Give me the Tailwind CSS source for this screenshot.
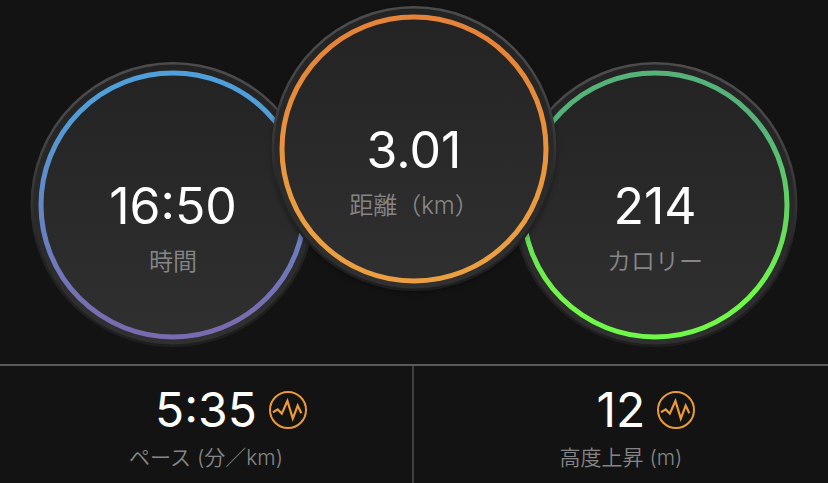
<!DOCTYPE html>
<html lang="ja">
<head>
    <meta charset="UTF-8">
    <meta name="viewport" content="width=device-width, initial-scale=1.0">
    <title>ランニング</title>
    <script src="https://cdn.jsdelivr.net/npm/@tailwindcss/browser@4"></script>
</head>
<body class="flex min-h-screen flex-col bg-[#131313] font-['Inter','Noto_Sans_CJK_JP',sans-serif] text-white">
    <!-- Shared gradients and icons -->
    <svg class="absolute size-0" aria-hidden="true">
        <defs>
            <linearGradient id="face" x1="0" y1="0" x2="0" y2="1">
                <stop offset="0" stop-color="#232323" />
                <stop offset="1" stop-color="#303030" />
            </linearGradient>
            <linearGradient id="rim" x1="0" y1="0" x2="0" y2="1">
                <stop offset="0" stop-color="#4c4c4c" />
                <stop offset="0.25" stop-color="#464646" />
                <stop offset="0.5" stop-color="#333333" />
                <stop offset="0.65" stop-color="#232323" />
                <stop offset="1" stop-color="#1e1e1e" />
            </linearGradient>
            <linearGradient id="blue" x1="0" y1="0" x2="0" y2="1">
                <stop offset="0.1" stop-color="#4fa0da" />
                <stop offset="0.95" stop-color="#7a6bb0" />
            </linearGradient>
            <linearGradient id="orange" x1="0" y1="0" x2="0" y2="1">
                <stop offset="0.1" stop-color="#e68338" />
                <stop offset="0.8" stop-color="#eb9f40" />
            </linearGradient>
            <linearGradient id="green" x1="0" y1="0" x2="0" y2="1">
                <stop offset="0.2" stop-color="#55b37a" />
                <stop offset="0.85" stop-color="#70f848" />
            </linearGradient>
        </defs>
        <symbol id="pulse" viewBox="0 0 38 38">
            <circle cx="19" cy="19" r="18" fill="none" stroke="#eb9b35" stroke-width="2" />
            <path d="M4 21.2 8.7 18.4 12.8 22.6 18.4 10 23.8 27.6 28.7 14.6 32.3 22.2" fill="none" stroke="#eb9b35" stroke-width="2.2" />
        </symbol>
    </svg>

    <main class="flex justify-center pt-1.5 pb-4">
        <section class="mt-14 grid w-[286px]">
            <svg class="col-start-1 row-start-1 w-full" viewBox="0 0 286 286" aria-hidden="true">
                <circle cx="143" cy="142.5" r="141.2" fill="url(#face)" stroke="url(#rim)" stroke-width="2.5" />
                <circle cx="143" cy="143" r="132" fill="none" stroke="url(#blue)" stroke-width="5" />
            </svg>
            <div class="z-10 col-start-1 row-start-1 pt-30 text-center">
                <p class="text-[50px] leading-12">16:50</p>
                <h2 class="mt-4 text-2xl leading-8 font-[350] text-[#868686]">時間</h2>
            </div>
        </section>

        <section class="z-10 -mx-[45px] grid w-[286px] self-start">
            <svg class="col-start-1 row-start-1 w-full overflow-visible drop-shadow-[0_2px_2px_rgb(0_0_0/0.3)]" viewBox="0 0 286 286" aria-hidden="true">
                <circle cx="143" cy="142.5" r="141.2" fill="url(#face)" stroke="url(#rim)" stroke-width="2.5" />
                <circle cx="143" cy="143" r="132" fill="none" stroke="url(#orange)" stroke-width="5" />
            </svg>
            <div class="z-10 col-start-1 row-start-1 pt-30 text-center">
                <p class="text-[50px] leading-12">3.01</p>
                <h2 class="mt-4 text-2xl leading-8 font-[350] text-[#868686]">距離（km）</h2>
            </div>
        </section>

        <section class="mt-14 grid w-[286px]">
            <svg class="col-start-1 row-start-1 w-full" viewBox="0 0 286 286" aria-hidden="true">
                <circle cx="143" cy="142.5" r="141.2" fill="url(#face)" stroke="url(#rim)" stroke-width="2.5" />
                <circle cx="143" cy="143" r="132" fill="none" stroke="url(#green)" stroke-width="5" />
            </svg>
            <div class="z-10 col-start-1 row-start-1 pt-30 text-center">
                <p class="text-[50px] leading-12">214</p>
                <h2 class="mt-4 text-2xl leading-8 font-[350] text-[#868686]">カロリー</h2>
            </div>
        </section>
    </main>

    <footer class="grid flex-1 grid-cols-2 border-t-2 border-[#5a5a5a]">
        <section class="border-r-2 border-[#404040] pt-5 text-center">
            <div class="grid grid-cols-[1fr_auto_1fr] items-center gap-3">
                <p class="col-start-2 text-5xl leading-12">5:35</p>
                <svg class="size-[38px]" aria-hidden="true"><use href="#pulse" /></svg>
            </div>
            <h2 class="mt-2.5 text-[21px] leading-7 font-[350] text-[#868686]">ペース (分／km)</h2>
        </section>
        <section class="pt-5 text-center">
            <div class="grid grid-cols-[1fr_auto_1fr] items-center gap-3">
                <p class="col-start-2 text-5xl leading-12">12</p>
                <svg class="size-[38px]" aria-hidden="true"><use href="#pulse" /></svg>
            </div>
            <h2 class="mt-2.5 text-[21px] leading-7 font-[350] text-[#868686]">高度上昇 (m)</h2>
        </section>
    </footer>
</body>
</html>
